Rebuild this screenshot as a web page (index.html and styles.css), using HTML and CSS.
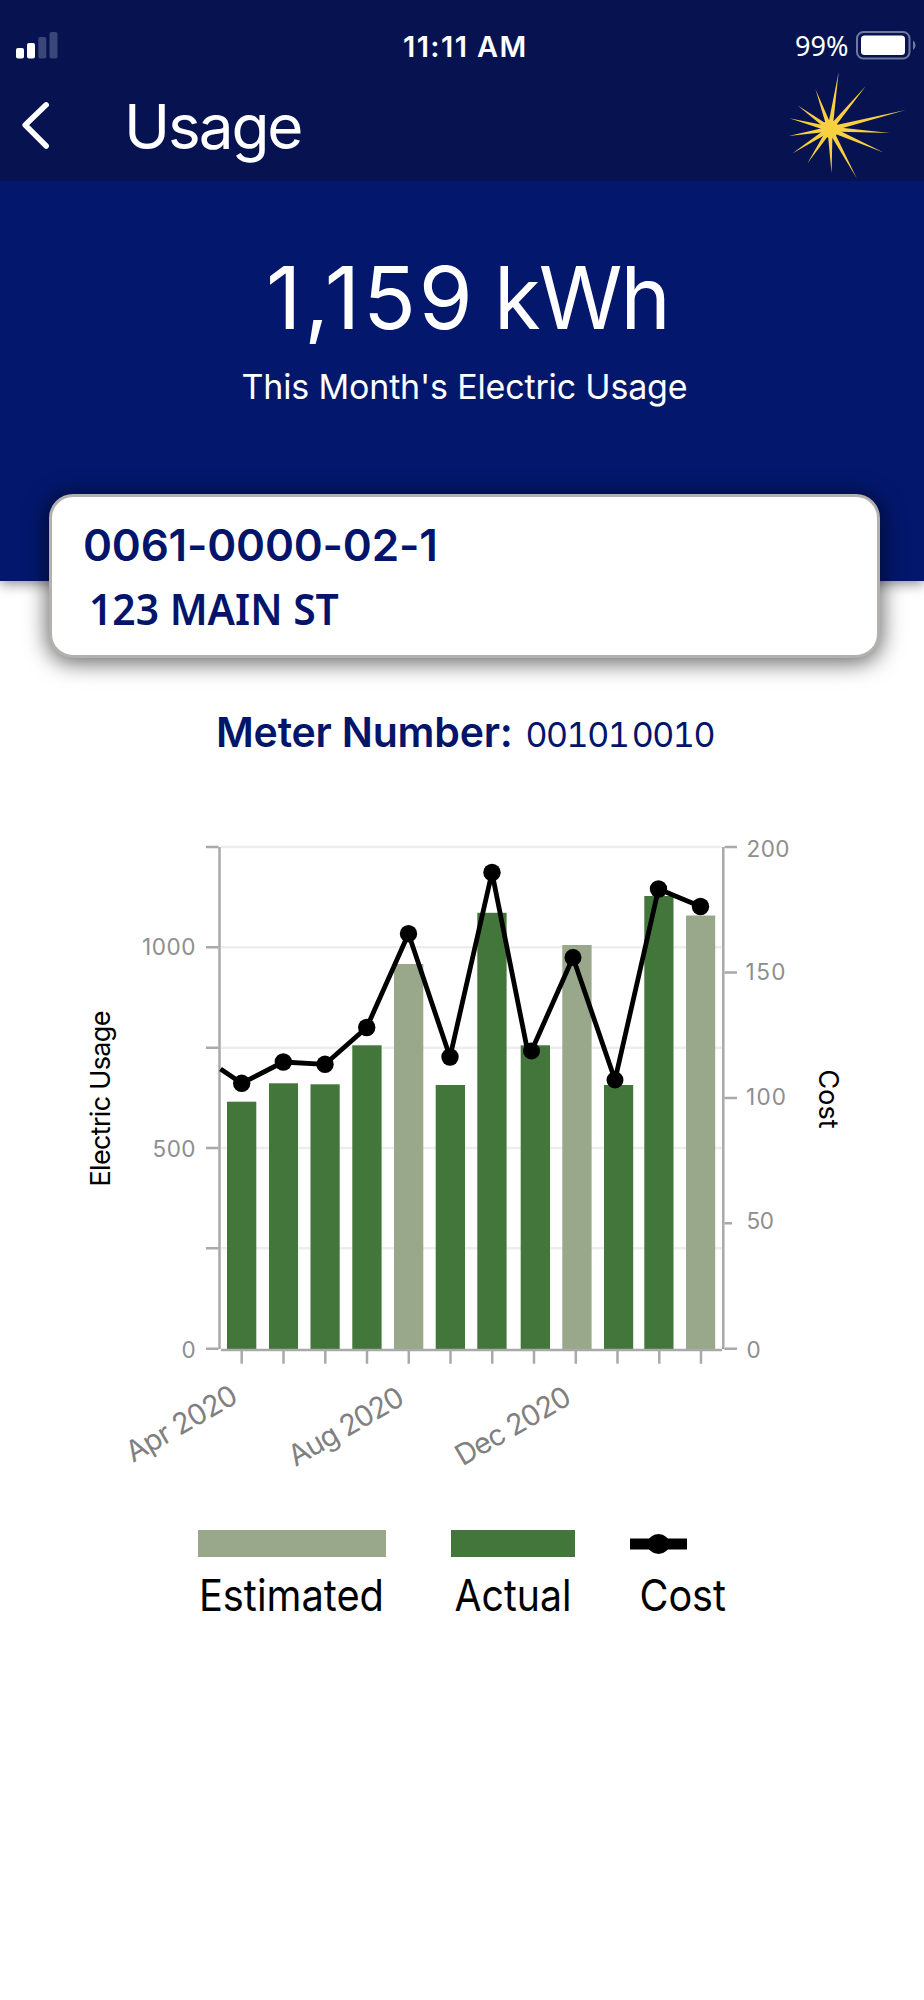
FILE: index.html
```html
<!DOCTYPE html>
<html lang="en">
<head>
<meta charset="utf-8">
<title>Usage</title>
<link rel="stylesheet" href="styles.css">
</head>
<body>
<header class="top">
  <div class="status">
    <svg class="signal" viewBox="0 0 42 27" width="42" height="27" fill="#fff">
      <rect x="0" y="16" width="8" height="10.5" rx="2"/>
      <rect x="11" y="11" width="8" height="15.5" rx="2"/>
      <g fill="#394677"><rect x="22.300" y="5" width="8" height="21.500" rx="2"/><rect x="33.500" y="0" width="8" height="26.500" rx="2"/></g>
    </svg>
    <span class="time">11:11 AM</span>
    <span class="charge">99%</span>
    <svg class="battery" viewBox="0 0 60 29" width="60" height="29">
      <rect x="1" y="1" width="52.500" height="26.500" rx="6.500" fill="none" stroke="#6f79a0" stroke-width="2"/>
      <rect x="5" y="4.500" width="44" height="19.500" rx="3.500" fill="#fff"/>
      <path d="M57 9.500q2.500 1.500 2.500 4.700t-2.500 4.700z" fill="#6f79a0"/>
    </svg>
  </div>
  <nav class="bar">
    <svg class="back" viewBox="0 0 30 50" width="30" height="50"><path d="M25.200 4.800 4.200 25l21 21" fill="none" stroke="#fff" stroke-width="5.500" stroke-linecap="round" stroke-linejoin="round"/></svg>
    <h1 class="title">Usage</h1>
    <svg class="sun" viewBox="-42 -60 120 112" width="120" height="112" fill="#f8d040">
      <circle r="8.700"/>
      <path d="M0-2.600 58 0 0 2.600z" transform="rotate(-81.400)"/>
      <path d="M0-2.600 56 0 0 2.600z" transform="rotate(-50.200)"/>
      <path d="M0-2.600 78 0 0 2.600z" transform="rotate(-14.100)"/>
      <path d="M0-2.600 60 0 0 2.600z" transform="rotate(3.900)"/>
      <path d="M0-2.600 58.500 0 0 2.600z" transform="rotate(23.800)"/>
      <path d="M0-2.600 56 0 0 2.600z" transform="rotate(61.500)"/>
      <path d="M0-2.600 44 0 0 2.600z" transform="rotate(88)"/>
      <path d="M0-2.600 41 0 0 2.600z" transform="rotate(123.300)"/>
      <path d="M0-2.600 45 0 0 2.600z" transform="rotate(147)"/>
      <path d="M0-2.600 42 0 0 2.600z" transform="rotate(170.400)"/>
      <path d="M0-2.600 42 0 0 2.600z" transform="rotate(194.700)"/>
      <path d="M0-2.600 40 0 0 2.600z" transform="rotate(216.200)"/>
      <path d="M0-2.600 42 0 0 2.600z" transform="rotate(249.900)"/>
    </svg>
  </nav>
</header>
<section class="hero">
  <div class="total"><span class="amount">1,159</span><span class="unit">kWh</span></div>
  <div class="caption">This Month's Electric Usage</div>
</section>
<section class="card">
  <div class="account">0061-0000-02-1</div>
  <div class="address">123 MAIN ST</div>
</section>
<div class="meter"><strong class="meter-label">Meter Number:</strong><span class="meter-value">00101<i class="gap"></i>0010</span></div>
<svg class="chart" viewBox="0 800 924 690" width="924" height="690">
  <g stroke="#ededed" stroke-width="2.500"><path d="M221 847H722M221 947.300H722M221 1047.700H722M221 1148H722M221 1248.300H722"/></g>
  <g fill="#43763a">
    <rect x="227" y="1101.700" width="29.300" height="248"/><rect x="269" y="1083.300" width="29" height="266"/><rect x="310.500" y="1084.300" width="29.200" height="265"/><rect x="352.300" y="1045.300" width="29.300" height="304"/><rect x="435.700" y="1085" width="29.300" height="264"/><rect x="477.300" y="912.800" width="29.300" height="437"/><rect x="520.700" y="1045.300" width="29.300" height="304"/><rect x="604" y="1085" width="29.200" height="264"/><rect x="644.300" y="896" width="29.200" height="453"/>
  </g>
  <g fill="#99a88b"><rect x="394" y="964" width="29.300" height="385"/><rect x="562.300" y="945" width="29.300" height="404"/><rect x="686" y="915.500" width="29.200" height="434"/></g>
  <g fill="none" stroke="#a9a9a9" stroke-width="2.500">
    <path d="M219.500 847V1349M723.300 847V1349M221 1350H722"/>
    <path d="M206 847H218.500M206 947.300H218.500M206 1047.700H218.500M206 1148H218.500M206 1248.300H218.500M206 1348.700H218.500M724.500 847H737M724.500 972.500H737M724.500 1098H737M724.500 1223.300H732M724.500 1348.700H737"/>
    <path d="M241.700 1350V1363.700M283.500 1350V1363.700M325.300 1350V1363.700M367 1350V1363.700M408.800 1350V1363.700M450.500 1350V1363.700M492.300 1350V1363.700M534 1350V1363.700M575.800 1350V1363.700M617.500 1350V1363.700M659.300 1350V1363.700M701 1350V1363.700"/>
  </g>
  <path d="M220.500 1069 241.700 1083.300 283.300 1062 325 1064.300 366.700 1027.500 408.500 933.700 450 1057 492 872.500 527 1048 531.500 1051 573 957.500 615 1080 658.500 889 700.500 906.500" fill="none" stroke="#000" stroke-width="4.800" stroke-linejoin="round"/>
  <g><circle cx="241.700" cy="1083.300" r="8.700"/><circle cx="283.300" cy="1062" r="8.700"/><circle cx="325" cy="1064.300" r="8.700"/><circle cx="366.700" cy="1027.500" r="8.700"/><circle cx="408.500" cy="933.700" r="8.700"/><circle cx="450" cy="1057" r="8.700"/><circle cx="492" cy="872.500" r="8.700"/><circle cx="531.500" cy="1051" r="8.500"/><circle cx="573" cy="957.500" r="8.500"/><circle cx="615" cy="1080" r="8.500"/><circle cx="658.500" cy="889" r="8.700"/><circle cx="700.500" cy="906.500" r="8.700"/></g>
  <g class="tick-text">
    <text x="142" y="955" textLength="53.500">1000</text><text x="152.500" y="1156.500" textLength="43">500</text><text x="181.500" y="1357.500">0</text>
    <text x="746.500" y="857" textLength="43">200</text><text x="745.500" y="979.700" textLength="40">150</text><text x="746" y="1104.700" textLength="40">100</text><text x="746.500" y="1228.500" textLength="27.500">50</text><text x="746.500" y="1357.500">0</text>
  </g>
  <g class="month-text">
    <text transform="translate(133 1463) rotate(-30)" textLength="123.500">Apr 2020</text>
    <text transform="translate(295.500 1467) rotate(-30)" textLength="128">Aug 2020</text>
    <text transform="translate(462.500 1466.500) rotate(-30)" textLength="128">Dec 2020</text>
  </g>
  <g class="axis-text">
    <text transform="translate(110 1186.500) rotate(-90)" textLength="176">Electric Usage</text>
    <text transform="translate(818.700 1069.500) rotate(90)" textLength="59">Cost</text>
  </g>
</svg>
<div class="legend">
  <div class="key key-estimated"><span class="swatch"></span><span class="key-text">Estimated</span></div>
  <div class="key key-actual"><span class="swatch"></span><span class="key-text">Actual</span></div>
  <div class="key key-cost">
    <svg class="marker" viewBox="0 0 57 27" width="57" height="27"><path d="M0 8.500H57V19.500H0z"/><ellipse cx="28.500" cy="14" rx="11" ry="10"/></svg>
    <span class="key-text">Cost</span>
  </div>
</div>
</body>
</html>
```
FILE: styles.css
```css
* { box-sizing: border-box; }
body { margin: 0; background: #fff; font-family: Inter, "Liberation Sans", sans-serif; }
.top { position: relative; z-index: 1; height: 181px; background: #061350; color: #fff; display: flex; flex-direction: column; }
.status { height: 80px; padding: 31px 10px 0 16px; display: grid; grid-template-columns: 387px 392px 62px 1fr; align-items: start; }
.signal, .battery, .back, .sun, .chart { display: block; }
.signal { margin-top: 1px; }
.time { font-size: 29px; font-weight: 560; line-height: 31px; letter-spacing: 1.4px; white-space: nowrap; }
.charge { font-family: "Noto Sans", sans-serif; font-size: 27px; line-height: 29px; white-space: nowrap; }
.battery { margin-left: -1px; }
.bar { flex: 1; display: flex; align-items: flex-start; padding: 0 16px 0 21px; }
.back { margin-top: 20px; }
.title { margin: 16px 0 0 73px; font-size: 62px; line-height: 62px; font-weight: 400; letter-spacing: -2.1px; }
.sun { margin: -11px 0 0 auto; }
.hero { height: 400px; background: #03176d; color: #fff; padding-top: 67px; box-shadow: 0 3px 12px rgba(0, 0, 0, .45); }
.total { display: flex; padding-left: 266px; font-size: 87px; line-height: 100px; }
.amount { width: 228px; letter-spacing: 2.9px; }
.unit { letter-spacing: -2px; transform: scaleX(.977); transform-origin: 0 50%; }
.caption { margin-top: 19px; padding-left: 5px; text-align: center; font-size: 34px; line-height: 40px; letter-spacing: -.17px; }
.card { position: relative; width: 831px; height: 164px; margin: -87px 0 0 49px; padding: 23px 31px; background: #fff; border: 3px solid #b3b1b0; border-radius: 24px; color: #03146b; box-shadow: 0 3px 22px 2px rgba(0, 0, 0, .6); }
.account { font-size: 44px; line-height: 50px; font-weight: 600; letter-spacing: -.2px; }
.address { margin: 13px 0 0 6px; font-family: "Noto Sans", sans-serif; font-size: 44px; line-height: 50px; font-weight: 600; transform: scaleX(.928); transform-origin: 0 50%; }
.meter { height: 142px; padding: 54px 0 0 216px; display: flex; align-items: flex-start; color: #03146b; white-space: nowrap; }
.meter-label { width: 299px; font-size: 41px; line-height: 41px; font-weight: 600; letter-spacing: -.2px; }
.meter-value { margin: 5px 0 0 10.5px; font-size: 34px; line-height: 36px; font-variant-numeric: tabular-nums; letter-spacing: -1.5px; }
.gap { display: inline-block; width: 3.5px; }
.tick-text { font-size: 22.500px; fill: #8e8e8e; }
.month-text { font-size: 29px; fill: #808080; }
.axis-text { font-size: 27px; fill: #000; }
.legend { display: flex; padding: 41px 0 0 198px; }
.key { display: flex; flex-direction: column; }
.key-estimated { width: 253px; }
.key-actual { width: 179px; }
.swatch, .marker { display: block; margin-top: -1px; height: 27px; }
.swatch { background: #99a88b; width: 188px; }
.key-actual .swatch { background: #43763a; width: 124px; }
.key-text { margin-top: 16px; font-size: 44px; line-height: 44px; transform-origin: 0 50%; white-space: nowrap; }
.key-estimated .key-text { transform: scaleX(.905); padding-left: 1px; }
.key-actual .key-text { transform: scaleX(.89); padding-left: 4px; }
.key-cost .key-text { transform: scaleX(.9); padding-left: 10.5px; }
```
